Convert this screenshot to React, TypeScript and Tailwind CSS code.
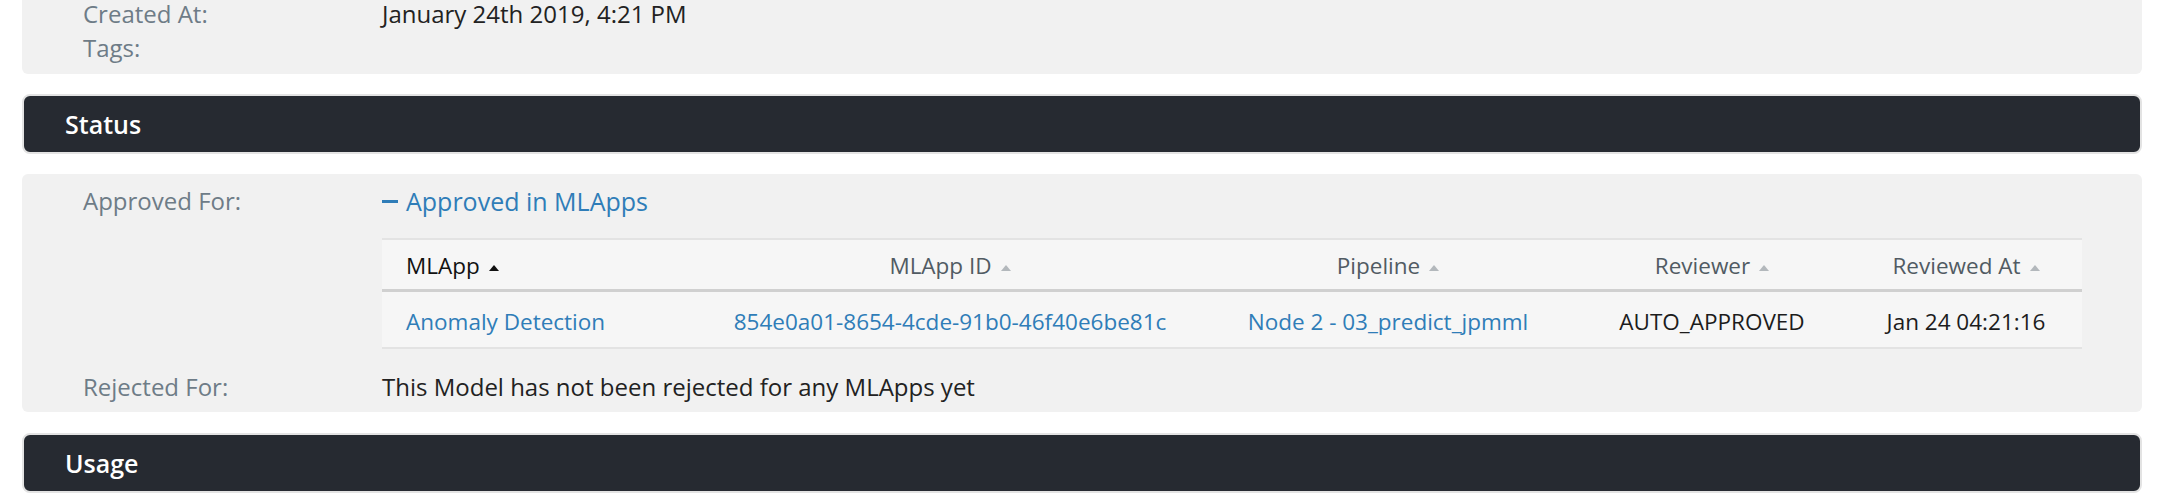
const rows = [
  {
    app: 'Anomaly Detection',
    id: '854e0a01-8654-4cde-91b0-46f40e6be81c',
    pipeline: 'Node 2 - 03_predict_jpmml',
    reviewer: 'AUTO_APPROVED',
    reviewedAt: 'Jan 24 04:21:16',
  },
];

const columns = [
  { label: 'MLApp', width: 'w-[316px]', align: 'text-left pl-[24px]', active: true },
  { label: 'MLApp ID', width: 'w-[504px]', align: 'text-center', active: false },
  { label: 'Pipeline', width: 'w-[372px]', align: 'text-center', active: false },
  { label: 'Reviewer', width: 'w-[276px]', align: 'text-center', active: false },
  { label: 'Reviewed At', width: 'w-[232px]', align: 'text-center', active: false },
];

const SortArrow = ({ active }: { active: boolean }) => (
  <svg width="10" height="6" viewBox="0 0 10 6" className="ml-[9px] inline-block align-middle">
    <path d="M0 6 L5 0 L10 6 Z" fill={active ? '#111111' : '#b3b8bc'} />
  </svg>
);

const SectionHeader = ({ title }: { title: string }) => (
  <div className="flex h-[60px] items-center rounded-[8px] border-2 border-[#e3e3e3] bg-[#262a31] pl-[41px]">
    <span className="text-[25px] font-semibold text-white">{title}</span>
  </div>
);

const Field = ({ label, children }: { label: string; children?: React.ReactNode }) => (
  <div className="flex">
    <div className="w-[299px] shrink-0 text-[#6e7c87]">{label}</div>
    <div className="min-w-0 flex-1 text-[#222222]">{children}</div>
  </div>
);

export default function App() {
  return (
    <div
      className="min-h-[500px] bg-white pl-[22px] pr-[18px] text-[24px] leading-[34px]"
      style={{ fontFamily: '"Open Sans", "Noto Sans", sans-serif' }}
    >
      {/* details panel, scrolled partly off the top */}
      <div className="-mt-[13px] rounded-b-[6px] bg-[#f1f1f1] pb-[9px] pl-[61px] pr-[60px] pt-[10px]">
        <Field label="Created At:">January 24th 2019, 4:21 PM</Field>
        <Field label="Tags:" />
      </div>

      <div className="mt-[20px]">
        <SectionHeader title="Status" />
      </div>

      <div className="mt-[20px] rounded-[6px] bg-[#f1f1f1] pb-[8px] pl-[61px] pr-[60px] pt-[10px]">
        <Field label="Approved For:">
          <div className="flex items-center text-[25px] text-[#2f7db8]">
            <span className="mr-[8px] inline-block h-[3px] w-[16px] bg-[#2f7db8]" />
            <span>Approved in MLApps</span>
          </div>
          <table className="mb-[21px] mt-[20px] w-full border-collapse text-[22.5px]">
            <thead>
              <tr className="border-b-[3px] border-t-2 border-b-[#d0d0d0] border-t-[#e3e3e3] bg-[#f6f6f6]">
                {columns.map((col) => (
                  <th
                    key={col.label}
                    className={`h-[51px] pt-[3px] font-normal ${col.width} ${col.align} ${
                      col.active ? 'text-[#111111]' : 'text-[#515b63]'
                    }`}
                  >
                    {col.label}
                    <SortArrow active={col.active} />
                  </th>
                ))}
              </tr>
            </thead>
            <tbody>
              {rows.map((row) => (
                <tr key={row.id} className="border-b-2 border-b-[#e3e3e3] bg-[#f6f6f6] [&>td]:pt-[5px]">
                  <td className="h-[58px] pl-[24px] text-left text-[#2f7db8]">{row.app}</td>
                  <td className="text-center text-[#2f7db8]">{row.id}</td>
                  <td className="text-center text-[#2f7db8]">{row.pipeline}</td>
                  <td className="text-center text-[#1c1c1c]">{row.reviewer}</td>
                  <td className="text-center text-[#1c1c1c]">{row.reviewedAt}</td>
                </tr>
              ))}
            </tbody>
          </table>
        </Field>
        <Field label="Rejected For:">This Model has not been rejected for any MLApps yet</Field>
      </div>

      <div className="mt-[21px]">
        <SectionHeader title="Usage" />
      </div>
    </div>
  );
}
